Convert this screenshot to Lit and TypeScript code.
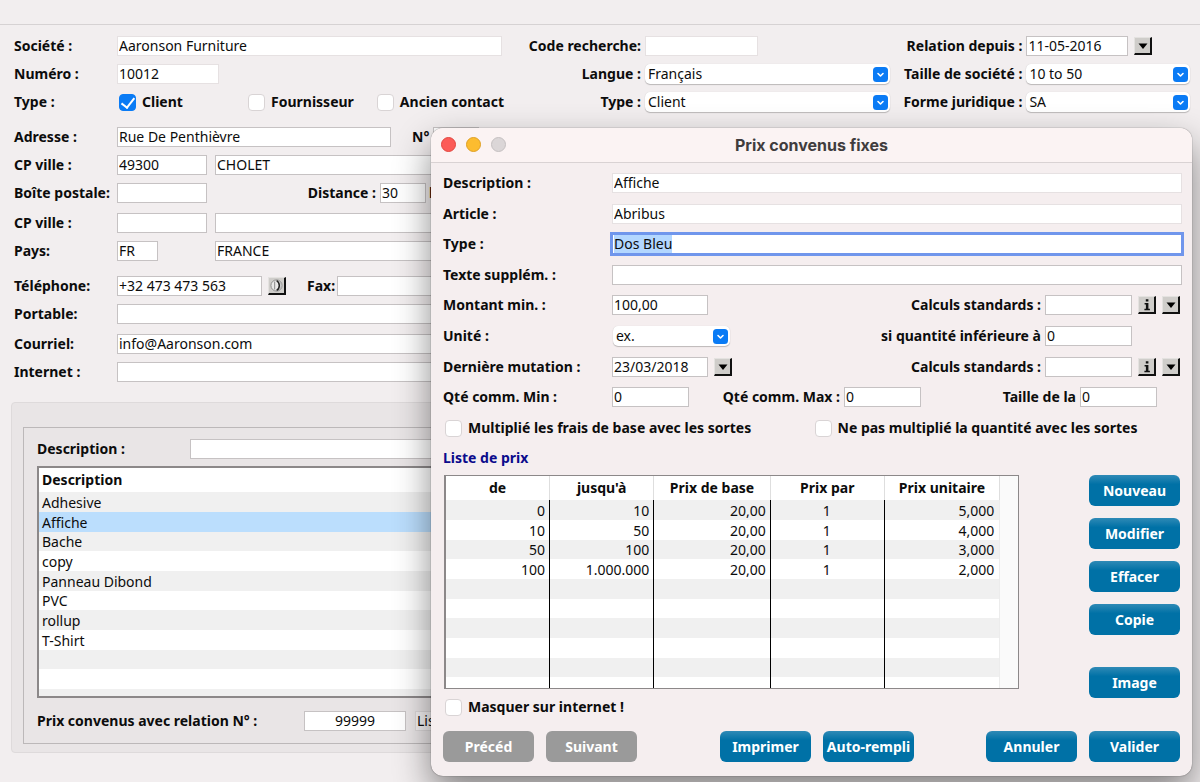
import { LitElement, html, css, svg, nothing } from "lit";
import { customElement, query } from "lit/decorators.js";
import { classMap } from "lit/directives/class-map.js";

interface PriceRow {
  from: string;
  to: string;
  base: string;
  per: string;
  unit: string;
}

const AGREEMENTS = ["Adhesive", "Affiche", "Bache", "copy", "Panneau Dibond", "PVC", "rollup", "T-Shirt", "", ""];

const PRICES: PriceRow[] = [
  { from: "0", to: "10", base: "20,00", per: "1", unit: "5,000" },
  { from: "10", to: "50", base: "20,00", per: "1", unit: "4,000" },
  { from: "50", to: "100", base: "20,00", per: "1", unit: "3,000" },
  { from: "100", to: "1.000.000", base: "20,00", per: "1", unit: "2,000" },
];

const EMPTY_PRICE: PriceRow = { from: "", to: "", base: "", per: "", unit: "" };

const chevron = html`<svg class="chevron" viewBox="0 0 15 15" aria-hidden="true">
  <rect width="15" height="15" rx="3.5" fill="#0a7bf5"></rect>
  <path d="M5 6.5 7.5 9 10 6.5" fill="none" stroke="#fff" stroke-width="1.6" stroke-linecap="round" stroke-linejoin="round"></path>
</svg>`;

const glyphs = {
  down: svg`<path d="M4.5 6.5h9L9 12z" fill="#000"></path>`,
  info: svg`<path d="M7.8 3.2h2.6v2.2H7.8zM6.6 7h3.8v5.8h1.5v1.4H6.4v-1.4h1.5V8.4H6.6z" fill="#111"></path>`,
  phone: svg`<circle cx="8.5" cy="8.5" r="5.6" fill="#e9e8e8" stroke="#8f8f8f"></circle>
    <path d="M6.6 4.4v8.2" stroke="#999" stroke-width="1.2"></path>
    <path d="M8.6 3.6c3.6 1.8 3.6 8 0 9.8" fill="none" stroke="#222" stroke-width="1.5"></path>
    <path d="M11.5 4.5c2 2 2 6 0 8" fill="none" stroke="#aaa"></path>`,
};

@customElement("app-root")
export class AppRoot extends LitElement {
  static styles = css`
    :host {
      display: block;
      --face: "Noto Sans", "Open Sans", sans-serif;
      --line: #c6c2c3;
      color: #0c0c0c;
      font: 14px/20px var(--face);
    }
    * {
      box-sizing: border-box;
    }
    input,
    select,
    button {
      font: inherit;
      color: inherit;
      margin: 0;
    }
    label,
    .caption {
      font-weight: 700;
      white-space: nowrap;
    }

    .desktop {
      position: relative;
      min-height: 100vh;
      overflow: hidden;
      background: #f2eeef;
    }
    .topbar {
      height: 25px;
      border-bottom: 1px solid #d6d2d3;
    }
    .record {
      padding: 11px 10px 20px 14px;
    }

    .text {
      height: 20px;
      min-width: 0;
      padding: 0 1px;
      border: 1px solid var(--line);
      border-radius: 0;
      background: #fff;
      outline: none;
    }
    .text.soft {
      border-color: #e6e1e2;
    }
    .text.center {
      text-align: center;
    }
    .text.readonly {
      background: #f4f1f2;
      border-color: #dcd8d9;
    }
    .text.focus:focus {
      box-shadow: 0 0 0 2px #7096ec;
      border-color: #7096ec;
    }
    .text::selection {
      background: #b3d7ff;
      color: #0c0c0c;
    }
    .grow {
      flex: 1;
    }
    .w41 { width: 41px; }
    .w46 { width: 46px; }
    .w77 { width: 77px; }
    .w87 { width: 87px; }
    .w90 { width: 90px; }
    .w96 { width: 96px; }
    .w102 { width: 102px; }
    .w113 { width: 113px; }
    .w145 { width: 145px; }
    .w274 { width: 274px; }

    .drop {
      display: grid;
      align-items: center;
      height: 20px;
    }
    .drop select,
    .drop .chevron {
      grid-area: 1 / 1;
    }
    .drop select {
      appearance: none;
      width: 100%;
      height: 20px;
      padding: 0 20px 0 3px;
      border: 0;
      border-radius: 5px;
      background: #fff;
      box-shadow: 0 1px 1px rgba(0, 0, 0, 0.22), 0 0 1px rgba(0, 0, 0, 0.15);
      outline: none;
    }
    .drop .chevron {
      justify-self: end;
      width: 15px;
      height: 15px;
      margin-right: 2px;
      pointer-events: none;
    }
    .unit {
      width: 117px;
      margin-left: 1px;
    }

    .tick {
      display: flex;
      align-items: center;
      gap: 6px;
      padding-left: 2px;
    }
    .tick input {
      appearance: none;
      display: grid;
      place-items: center;
      width: 17px;
      height: 17px;
      border: 1px solid #d9d4d5;
      border-radius: 4px;
      background: #fff;
    }
    .tick input:checked {
      border-color: #0a7bf5;
      background: #0a7bf5;
    }
    .tick input:checked::before {
      content: "";
      width: 6px;
      height: 11px;
      margin-top: -2px;
      border: solid #fff;
      border-width: 0 2px 2px 0;
      transform: rotate(38deg);
    }

    .mini {
      display: block;
      flex: none;
      width: 18px;
      height: 18px;
      padding: 0;
      border: solid;
      border-width: 1px 2px 2px 1px;
      border-color: #e4e2e0 #111 #111 #e4e2e0;
      background: #cfcdca;
    }
    .mini svg {
      display: block;
      width: 18px;
      height: 18px;
      margin: -1px;
    }

    .head {
      display: grid;
      grid-template-columns: 103px 385px 143px 3fr 136px 2fr;
      grid-auto-rows: 20px;
      row-gap: 8px;
      align-items: center;
    }
    .head .side {
      justify-self: end;
      padding-right: 4px;
    }
    .ticks {
      display: grid;
      grid-template-columns: repeat(3, 129px);
    }
    .withmini {
      display: flex;
      align-items: center;
      gap: 6px;
    }
    .group {
      display: grid;
      gap: 8px;
      width: 488px;
      margin-top: 10px;
    }
    .group.apart {
      margin-top: 15px;
    }
    .row {
      display: flex;
      align-items: center;
    }
    .row .first {
      width: 103px;
    }
    .pair {
      margin-right: 8px;
    }
    .number {
      padding: 0 4px 0 21px;
    }
    .distance {
      width: 173px;
      padding-right: 4px;
      text-align: right;
    }
    .km {
      padding-left: 3px;
    }
    .fax {
      width: 51px;
      padding: 0 3px 0 21px;
    }
    .row .mini {
      margin-left: 6px;
    }

    .panel {
      margin: 0 12px 28px 11px;
      padding: 24px 11px 8px;
      border: 1px solid #dedadb;
      border-radius: 4px;
      background: #e9e5e6;
    }
    .panelbox {
      padding: 11px 12px 12px 13px;
      border: 1px solid #bcb8b9;
    }
    .search label {
      width: 153px;
    }
    .list {
      height: 232px;
      margin: 7px 0 13px;
      overflow: hidden;
      border: 1px solid #8c8889;
      border-width: 2px 1px 2px 2px;
      background: #fff;
    }
    .relation label {
      width: 267px;
    }
    .relation .text + .text {
      margin-left: 9px;
    }

    table {
      width: 100%;
      border-collapse: separate;
      border-spacing: 0;
      table-layout: fixed;
    }
    th {
      height: 24px;
      padding: 0 3px;
      font-weight: 700;
    }
    td {
      height: 20px;
      padding: 0 4px 0 3px;
      line-height: 19px;
    }
    tbody tr:nth-child(3n) td {
      height: 19px;
    }
    tbody tr:nth-child(odd) td {
      background: #f0f0f0;
    }
    .list th {
      text-align: left;
    }
    tbody .selected td {
      background: #bbdefd;
    }

    .window {
      position: absolute;
      top: 128px;
      left: 431px;
      right: 8px;
      border-radius: 12px;
      background: #f5eeef;
      box-shadow: 0 0 1px rgba(0, 0, 0, 0.75), 0 16px 36px rgba(0, 0, 0, 0.46);
    }
    .titlebar {
      display: grid;
      grid-template-columns: 90px 1fr 90px;
      align-items: center;
      height: 35px;
      padding: 0 10px 1px;
      border-bottom: 1px solid #d9d2d3;
      border-radius: 12px 12px 0 0;
      background: #fbf3f3;
    }
    .lights {
      display: flex;
      gap: 10px;
    }
    .light {
      width: 15px;
      height: 15px;
      padding: 0;
      border: 1px solid #e2463f;
      border-radius: 50%;
      background: #fc5b57;
    }
    .light.yellow {
      border-color: #dfa023;
      background: #fcbc2f;
    }
    .light.gray {
      border-color: #c5c0c1;
      background: #dbd6d7;
    }
    h1 {
      margin: 0;
      color: #403c3d;
      font: 700 16px/20px Inter, sans-serif;
      text-align: center;
    }
    .body {
      display: grid;
      gap: 10px;
      padding: 10px 10px 14px 12px;
    }
    .set {
      display: grid;
      gap: 11px;
    }
    .set .row {
      height: 20px;
    }
    .set .first {
      width: 169px;
    }
    .calc {
      display: flex;
      align-items: center;
      gap: 6px;
      margin-left: auto;
      padding-right: 2px;
    }
    .calc label {
      margin-right: -2px;
    }
    .calc .mini {
      margin-left: 0;
    }
    .calc.short {
      padding-right: 50px;
    }
    .max {
      width: 155px;
      padding-right: 4px;
      text-align: right;
    }
    .size {
      display: flex;
      gap: 4px;
      margin-left: auto;
      padding-right: 25px;
    }
    .halves {
      display: grid;
      grid-template-columns: 1fr 1fr;
    }
    h2 {
      margin: 0;
      color: #0b0b8c;
      font: 700 14px/20px var(--face);
    }
    .lower {
      display: flex;
      justify-content: space-between;
      gap: 70px;
      margin-top: -3px;
      padding-right: 2px;
    }
    .main {
      display: grid;
      flex: 1;
      gap: 8px;
    }
    .prices {
      height: 214px;
      margin-left: 1px;
      overflow: hidden;
      border: 1px solid #8c8889;
      border-width: 1px 1px 1px 2px;
      background: #fff;
    }
    .prices td {
      border-right: 1px solid #000;
      text-align: right;
    }
    .prices th {
      border-right: 1px solid #dedede;
    }
    .prices td.per {
      text-align: center;
    }
    .prices td.unitprice {
      border-right: 1px solid #ececec;
      padding-right: 5px;
    }
    .prices .gutter {
      border: 0;
      background: #fafafa;
    }
    .actions {
      display: grid;
      gap: 12px;
      align-content: start;
    }
    .button {
      width: 91px;
      height: 31px;
      padding: 0;
      border: 0;
      border-radius: 6px;
      background: linear-gradient(#2f8ab6, #0071a6 30%);
      color: #fff;
      font-weight: 700;
      white-space: nowrap;
    }
    .button:disabled {
      background: #9a9a9a;
    }
    .button.apart {
      margin-top: 20px;
    }
    .footer {
      display: flex;
      gap: 72px;
      margin-top: 4px;
      padding-right: 2px;
    }
    .footer div {
      display: flex;
      gap: 12px;
    }
    .footer .paging {
      margin-right: auto;
    }
  `;

  @query("#p-type") private typeField!: HTMLInputElement;

  firstUpdated() {
    this.typeField.focus();
    this.typeField.select();
  }

  private field(id: string, value: string, look: string, label?: string) {
    return html`<input class="text ${look}" id=${id} type="text" .value=${value} aria-label=${label ?? nothing} spellcheck="false" />`;
  }

  private drop(id: string, value: string, look = "") {
    return html`<div class="drop ${look}"><select id=${id}><option>${value}</option></select>${chevron}</div>`;
  }

  private tick(id: string, text: string, checked = false) {
    return html`<div class="tick"><input id=${id} type="checkbox" .checked=${checked} /><label for=${id}>${text}</label></div>`;
  }

  private mini(kind: keyof typeof glyphs, label: string) {
    return html`<button class="mini" type="button" aria-label=${label}><svg viewBox="0 0 18 18" aria-hidden="true">${glyphs[kind]}</svg></button>`;
  }

  private renderRecord() {
    return html`
      <form class="record">
        <div class="head">
          <label for="company">Société :</label>
          ${this.field("company", "Aaronson Furniture", "soft")}
          <label class="side" for="code">Code recherche:</label>
          ${this.field("code", "", "soft w113")}
          <label class="side" for="since">Relation depuis :</label>
          <div class="withmini">${this.field("since", "11-05-2016", "w102")}${this.mini("down", "Choisir la date")}</div>

          <label for="number">Numéro :</label>
          ${this.field("number", "10012", "soft w102")}
          <label class="side" for="language">Langue :</label>
          ${this.drop("language", "Français")}
          <label class="side" for="headcount">Taille de société :</label>
          ${this.drop("headcount", "10 to 50")}

          <span class="caption">Type :</span>
          <div class="ticks">
            ${this.tick("client", "Client", true)} ${this.tick("supplier", "Fournisseur")} ${this.tick("former", "Ancien contact")}
          </div>
          <label class="side" for="kind">Type :</label>
          ${this.drop("kind", "Client")}
          <label class="side" for="legal">Forme juridique :</label>
          ${this.drop("legal", "SA")}
        </div>

        <div class="group apart">
          <div class="row">
            <label class="first" for="street">Adresse :</label>${this.field("street", "Rue De Penthièvre", "w274")}
            <label class="number" for="streetno">N°</label>${this.field("streetno", "", "w46")}
          </div>
          <div class="row">
            <label class="first" for="zip">CP ville :</label>${this.field("zip", "49300", "w90 pair")}
            ${this.field("city", "CHOLET", "grow", "Ville")}
          </div>
          <div class="row">
            <label class="first" for="pobox">Boîte postale:</label>${this.field("pobox", "", "w90")}
            <label class="distance" for="distance">Distance :</label>${this.field("distance", "30", "w46")}
            <span class="caption km">k</span>
          </div>
        </div>
        <div class="group">
          <div class="row">
            <label class="first" for="zip2">CP ville :</label>${this.field("zip2", "", "w90 pair")}
            ${this.field("city2", "", "grow", "Ville")}
          </div>
          <div class="row">
            <label class="first" for="country">Pays:</label>
            <div class="row w90 pair">${this.field("country", "FR", "w41")}</div>
            ${this.field("countryname", "FRANCE", "grow", "Nom du pays")}
          </div>
        </div>
        <div class="group apart">
          <div class="row">
            <label class="first" for="phone">Téléphone:</label>${this.field("phone", "+32 473 473 563", "w145")}
            ${this.mini("phone", "Appeler")}
            <label class="fax" for="fax">Fax:</label>${this.field("fax", "", "grow")}
          </div>
          <div class="row"><label class="first" for="mobile">Portable:</label>${this.field("mobile", "", "grow")}</div>
        </div>
        <div class="group">
          <div class="row"><label class="first" for="mail">Courriel:</label>${this.field("mail", "info@Aaronson.com", "grow")}</div>
          <div class="row"><label class="first" for="web">Internet :</label>${this.field("web", "", "grow")}</div>
        </div>
      </form>
    `;
  }

  private renderPanel() {
    return html`
      <section class="panel">
        <div class="panelbox">
          <div class="row search"><label for="search">Description :</label>${this.field("search", "", "grow")}</div>
          <div class="list">
            <table>
              <thead><tr><th scope="col">Description</th></tr></thead>
              <tbody>
                ${[...AGREEMENTS, ""].map(
                  (name) => html`<tr class=${classMap({ selected: name === "Affiche" })}><td>${name}</td></tr>`,
                )}
              </tbody>
            </table>
          </div>
          <div class="row relation">
            <label for="relation">Prix convenus avec relation N° :</label>${this.field("relation", "99999", "center w102")}
            ${this.field("listname", "Liste", "readonly grow", "Liste")}
          </div>
        </div>
      </section>
    `;
  }

  private renderPrices() {
    const rows = [...PRICES, ...Array.from({ length: 6 }, () => EMPTY_PRICE)];
    return html`
      <div class="prices">
        <table>
          <colgroup>
            <col style="width:18.2%" /><col style="width:18.2%" /><col style="width:20.4%" /><col style="width:19.9%" /><col style="width:20.2%" /><col />
          </colgroup>
          <thead>
            <tr>
              <th scope="col">de</th><th scope="col">jusqu'à</th><th scope="col">Prix de base</th>
              <th scope="col">Prix par</th><th scope="col">Prix unitaire</th><td class="gutter"></td>
            </tr>
          </thead>
          <tbody>
            ${rows.map(
              (r) => html`<tr>
                <td>${r.from}</td><td>${r.to}</td><td>${r.base}</td><td class="per">${r.per}</td>
                <td class="unitprice">${r.unit}</td><td class="gutter"></td>
              </tr>`,
            )}
          </tbody>
        </table>
      </div>
    `;
  }

  private renderWindow() {
    return html`
      <section class="window" role="dialog" aria-labelledby="title">
        <header class="titlebar">
          <div class="lights">
            <button class="light" type="button" aria-label="Fermer"></button>
            <button class="light yellow" type="button" aria-label="Réduire"></button>
            <button class="light gray" type="button" aria-label="Agrandir" disabled></button>
          </div>
          <h1 id="title">Prix convenus fixes</h1>
        </header>
        <div class="body">
          <div class="set">
            <div class="row"><label class="first" for="p-desc">Description :</label>${this.field("p-desc", "Affiche", "soft grow")}</div>
            <div class="row"><label class="first" for="p-item">Article :</label>${this.field("p-item", "Abribus", "soft grow")}</div>
          </div>
          <div class="set">
            <div class="row"><label class="first" for="p-type">Type :</label>${this.field("p-type", "Dos Bleu", "focus grow")}</div>
            <div class="row"><label class="first" for="p-extra">Texte supplém. :</label>${this.field("p-extra", "", "grow")}</div>
          </div>
          <div class="set">
            <div class="row">
              <label class="first" for="p-min">Montant min. :</label>${this.field("p-min", "100,00", "w96")}
              <div class="calc">
                <label for="p-calc1">Calculs standards :</label>${this.field("p-calc1", "", "w87")}
                ${this.mini("info", "Information")}${this.mini("down", "Choisir")}
              </div>
            </div>
            <div class="row">
              <label class="first" for="p-unit">Unité :</label>${this.drop("p-unit", "ex.", "unit")}
              <div class="calc short">
                <label for="p-below">si quantité inférieure à</label>${this.field("p-below", "0", "w87")}
              </div>
            </div>
            <div class="row">
              <label class="first" for="p-date">Dernière mutation :</label>${this.field("p-date", "23/03/2018", "w96")}
              ${this.mini("down", "Choisir la date")}
              <div class="calc">
                <label for="p-calc2">Calculs standards :</label>${this.field("p-calc2", "", "w87")}
                ${this.mini("info", "Information")}${this.mini("down", "Choisir")}
              </div>
            </div>
          </div>
          <div class="set">
            <div class="row">
              <label class="first" for="p-qmin">Qté comm. Min :</label>${this.field("p-qmin", "0", "w77")}
              <label class="max" for="p-qmax">Qté comm. Max :</label>${this.field("p-qmax", "0", "w77")}
              <div class="size"><label for="p-size">Taille de la</label>${this.field("p-size", "0", "w77")}</div>
            </div>
            <div class="halves">
              ${this.tick("p-mult", "Multiplié les frais de base avec les sortes")}
              ${this.tick("p-nomult", "Ne pas multiplié la quantité avec les sortes")}
            </div>
          </div>
          <h2>Liste de prix</h2>
          <div class="lower">
            <div class="main">
              ${this.renderPrices()} ${this.tick("p-hide", "Masquer sur internet !")}
            </div>
            <div class="actions">
              <button class="button" type="button">Nouveau</button>
              <button class="button" type="button">Modifier</button>
              <button class="button" type="button">Effacer</button>
              <button class="button" type="button">Copie</button>
              <button class="button apart" type="button">Image</button>
            </div>
          </div>
          <div class="footer">
            <div class="paging">
              <button class="button" type="button" disabled>Précéd</button>
              <button class="button" type="button" disabled>Suivant</button>
            </div>
            <div>
              <button class="button" type="button">Imprimer</button>
              <button class="button" type="button">Auto-rempli</button>
            </div>
            <div>
              <button class="button" type="button">Annuler</button>
              <button class="button" type="button">Valider</button>
            </div>
          </div>
        </div>
      </section>
    `;
  }

  render() {
    return html`
      <main class="desktop">
        <div class="topbar"></div>
        ${this.renderRecord()} ${this.renderPanel()} ${this.renderWindow()}
      </main>
    `;
  }
}
